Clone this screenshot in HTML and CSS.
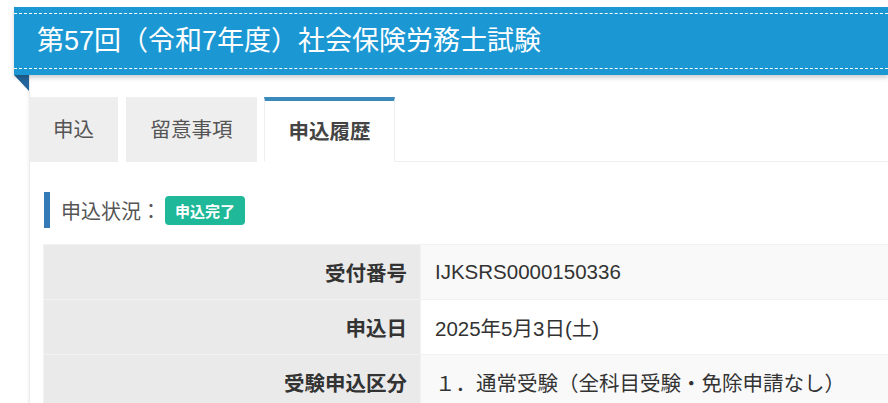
FILE: index.html
```html
<!DOCTYPE html>
<html lang="ja">
<head>
<meta charset="utf-8">
<title>第57回（令和7年度）社会保険労務士試験</title>
<link rel="stylesheet" href="styles.css">
</head>
<body>
<div class="page">
  <header class="banner">
    <div class="banner-inner">
      <h1 class="banner-title">第57回（令和7年度）社会保険労務士試験</h1>
    </div>
  </header>
  <div class="body-row">
    <div class="fold"></div>
    <main class="card">
      <nav class="tabs">
        <div class="tab tab-short">申込</div>
        <div class="tab">留意事項</div>
        <div class="tab tab-active">申込履歴</div>
        <div class="tab-rest"></div>
      </nav>
      <section class="content">
        <h2 class="status">申込状況：<span class="badge">申込完了</span></h2>
        <table class="info">
          <tr class="odd"><th>受付番号</th><td>IJKSRS0000150336</td></tr>
          <tr class="even"><th>申込日</th><td>2025年5月3日(土)</td></tr>
          <tr class="odd"><th>受験申込区分</th><td>１．通常受験（全科目受験・免除申請なし）</td></tr>
        </table>
      </section>
    </main>
  </div>
</div>
</body>
</html>
```
FILE: styles.css
```css
html, body {
  margin: 0;
  padding: 0;
  background: #fff;
}
body {
  font-family: "Liberation Sans", "Noto Sans CJK JP", sans-serif;
  color: #333;
  overflow: hidden;
}
.page {
  padding-top: 7px;
  padding-left: 14px;
}
.banner {
  background: #1b98d3;
  height: 68px;
  padding: 6px 0;
  box-sizing: border-box;
  box-shadow: 0 3px 4px rgba(0, 0, 0, 0.18);
  position: relative;
  z-index: 2;
}
.banner-inner {
  height: 100%;
  box-sizing: border-box;
  border-top: 1px dashed #fff;
  border-bottom: 1px dashed #fff;
  display: flex;
  align-items: center;
  padding-left: 23px;
}
.banner-title {
  margin: 0;
  font-size: 27px;
  font-weight: normal;
  color: #fff;
  white-space: nowrap;
  line-height: 1;
  padding-top: 1px;
}
.body-row {
  display: flex;
}
.fold {
  width: 15px;
  height: 16px;
  flex: none;
  background: #23659c;
  clip-path: polygon(0 0, 100% 0, 100% 100%);
}
.card {
  flex: 1;
  border-left: 1px solid #ececec;
  box-shadow: -1px 0 3px rgba(0, 0, 0, 0.06);
  padding-top: 22px;
  min-height: 400px;
}
.tabs {
  display: flex;
  height: 65px;
}
.tab {
  box-sizing: border-box;
  width: 131px;
  flex: none;
  text-align: center;
  background: #eeeeee;
  margin-right: 7px;
  font-size: 20.5px;
  line-height: 65px;
  color: #555;
  white-space: nowrap;
  border-bottom: 1px solid #eee;
}
.tab-short {
  width: 89px;
  margin-left: -1px;
  margin-right: 8px;
}
.tab-active {
  background: #fff;
  font-weight: bold;
  color: #444;
  border-top: 4px solid #3a8bbb;
  border-left: 1px solid #eee;
  border-right: 1px solid #eee;
  border-bottom: 1px solid #fff;
  line-height: 61px;
  margin-right: 0;
}
.tab-rest {
  flex: 1;
  border-bottom: 1px solid #eee;
}
.content {
  padding: 30px 0 0 14px;
}
.status {
  margin: 0;
  height: 36px;
  display: flex;
  align-items: center;
  border-left: 6px solid #337ab7;
  padding-left: 11px;
  font-size: 20px;
  font-weight: normal;
  color: #555;
}
.badge {
  display: inline-flex;
  align-items: center;
  height: 29px;
  padding: 0 10px;
  margin-left: 4px;
  background: #1fb899;
  color: #fff;
  font-size: 15px;
  font-weight: bold;
  border-radius: 4px;
}
.info {
  margin-top: 16px;
  margin-left: -1px;
  border-collapse: collapse;
  width: calc(100% + 200px);
  font-size: 20.5px;
}
.info th, .info td {
  height: 55px;
  box-sizing: border-box;
  border: 1px solid #f2f2f2;
  padding: 0;
}
.info th {
  width: 377px;
  background: #eaeaea;
  text-align: right;
  padding-right: 13px;
  font-weight: bold;
  color: #333;
}
.info td {
  text-align: left;
  padding-left: 14px;
  color: #333;
}
.info tr.odd td {
  background: #f9f9f9;
}
.info tr.even td {
  background: #fff;
}
```
